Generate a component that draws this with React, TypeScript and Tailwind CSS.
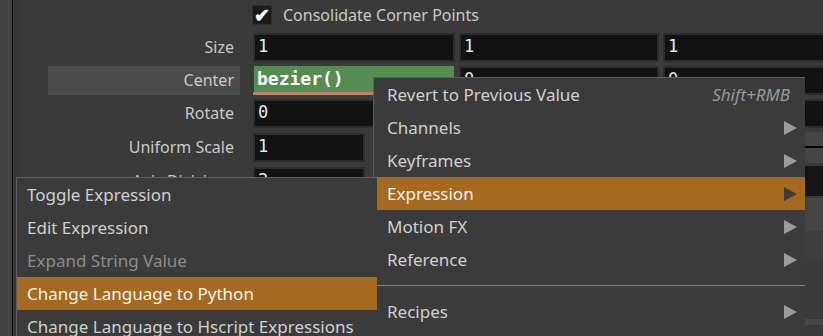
import React from 'react';

const sans = { fontFamily: '"Noto Sans", "Open Sans", sans-serif' };
const mono = { fontFamily: '"DejaVu Sans Mono", "Liberation Mono", monospace' };

function Arrow({ dark }: { dark?: boolean }) {
  return (
    <svg width="13" height="14" viewBox="0 0 13 14" className="shrink-0">
      <polygon points="0,0 13,7 0,14" fill={dark ? '#3b3b3b' : '#9c9c9c'} />
    </svg>
  );
}

function Field({ value, w = 'w-[202px]' }: { value: string; w?: string }) {
  return (
    <div
      className={`${w} h-[29px] shrink-0 bg-[#121212] border-2 border-[#2c2c2c] flex items-center pl-[3px] text-[17px] text-[#e6e6e6]`}
      style={mono}
    >
      {value}
    </div>
  );
}

function Label({ text, active }: { text: string; active?: boolean }) {
  return (
    <div className="w-[219px] shrink-0 flex justify-end">
      <div
        className={`w-[192px] h-[29px] flex items-center justify-end pr-[6px] text-[16px] text-[#c9c9c9] ${
          active ? 'bg-[#4b4b4b]' : ''
        }`}
      >
        {text}
      </div>
    </div>
  );
}

interface MenuItem {
  label: string;
  sub?: boolean;
  hot?: boolean;
  off?: boolean;
  key?: string;
  sep?: boolean;
}

const mainItems: MenuItem[] = [
  { label: 'Revert to Previous Value', key: 'Shift+RMB' },
  { label: 'Channels', sub: true },
  { label: 'Keyframes', sub: true },
  { label: 'Expression', sub: true, hot: true },
  { label: 'Motion FX', sub: true },
  { label: 'Reference', sub: true },
  { label: '', sep: true },
  { label: 'Recipes', sub: true },
];

const exprItems: MenuItem[] = [
  { label: 'Toggle Expression' },
  { label: 'Edit Expression' },
  { label: 'Expand String Value', off: true },
  { label: 'Change Language to Python', hot: true },
  { label: 'Change Language to Hscript Expressions' },
];

function Menu({ items }: { items: MenuItem[] }) {
  return (
    <div className="flex flex-col">
      {items.map((it, i) =>
        it.sep ? (
          <div key={i} className="h-[19px] flex items-center">
            <div className="w-full h-px bg-[#7c7c7c]" />
          </div>
        ) : (
          <div
            key={i}
            className={`h-[33px] flex items-center justify-between pl-[10px] pr-[8px] text-[17px] ${
              it.hot
                ? 'bg-[#a36a20] text-[#f2f2f2]'
                : it.off
                ? 'text-[#8d8d8d]'
                : 'text-[#d0d0d0]'
            }`}
          >
            <span className="whitespace-nowrap">{it.label}</span>
            {it.key && <span className="italic text-[#9a9a9a] pr-[7px]">{it.key}</span>}
            {it.sub && <Arrow dark={it.hot} />}
          </div>
        )
      )}
    </div>
  );
}

export default function App() {
  return (
    <div className="relative w-[823px] h-[336px] overflow-hidden bg-[#3a3a3a] flex" style={sans}>
      <div className="w-[13px] shrink-0 bg-[#424242] border-r border-black" />
      <div className="w-[8px] shrink-0 bg-[#373737]" />

      <div className="flex-1 flex flex-col">
        <div className="h-[30px] flex items-center pl-[231px] gap-[11px]">
          <div className="w-[20px] h-[20px] bg-[#1b1b1b] border border-[#303030] flex items-center justify-center text-white text-[19px] leading-none font-bold">
            ✔
          </div>
          <span className="text-[16px] text-[#c9c9c9]">Consolidate Corner Points</span>
        </div>

        <div className="h-[34px] flex items-center gap-[13px]">
          <Label text="Size" />
          <div className="flex gap-[4px]">
            <Field value="1" />
            <Field value="1" w="w-[200px]" />
            <Field value="1" />
          </div>
        </div>

        <div className="h-[32px] flex items-center gap-[13px]">
          <Label text="Center" active />
          <div className="flex gap-[4px]">
            <div className="w-[202px] h-[29px] flex flex-col">
              <div
                className="h-[26px] mx-px bg-[#548c52] flex items-center pl-[3px] text-[18px] font-bold text-white"
                style={mono}
              >
                bezier()
              </div>
              <div className="h-[3px] bg-[#c08070]" />
            </div>
            <Field value="0" w="w-[200px]" />
            <Field value="0" />
          </div>
        </div>

        <div className="h-[34px] flex items-center gap-[13px]">
          <Label text="Rotate" />
          <div className="flex gap-[4px]">
            <Field value="0" />
            <Field value="0" w="w-[200px]" />
            <Field value="0" />
          </div>
        </div>

        <div className="h-[34px] flex items-center gap-[13px]">
          <Label text="Uniform Scale" />
          <Field value="1" w="w-[112px]" />
          <div className="flex-1 h-[31px] flex flex-col justify-center bg-[#444444]">
            <div className="h-[2px] bg-black" />
          </div>
        </div>

        <div className="h-[34px] flex items-center gap-[13px]">
          <Label text="Axis Divisions" />
          <Field value="2" w="w-[112px]" />
          <div className="flex-1 h-[30px] bg-[#141414]" />
        </div>

        <div className="h-[33px] bg-[#444444]" />
        <div className="h-[30px] bg-[#3d3d3d]" />
        <div className="h-[58px] bg-[#3a3a3a]" />
        <div className="h-[6px] bg-[#474747]" />
      </div>

      <div className="absolute left-[373px] top-[77px] w-[432px] h-[280px] bg-[#3b3b3b] border-t border-l border-[#5e5e5e] pl-[3px]">
        <Menu items={mainItems} />
      </div>

      <div className="absolute left-[16px] top-[177px] w-[361px] h-[180px] bg-[#3b3b3b] border-t border-l border-[#5e5e5e]">
        <Menu items={exprItems} />
      </div>
    </div>
  );
}
